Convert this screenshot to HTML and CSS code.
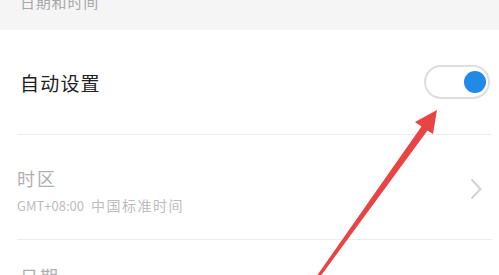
FILE: index.html
```html
<!DOCTYPE html>
<html lang="zh">
<head>
<meta charset="utf-8">
<link rel="stylesheet" href="styles.css">
</head>
<body>
<div class="page">
  <div class="section-header"><span class="header-title">日期和时间</span></div>
  <div class="row row-auto">
    <span class="row-title">自动设置</span>
    <div class="toggle"><div class="knob"></div></div>
  </div>
  <div class="row row-zone">
    <div class="zone-text">
      <div class="zone-title">时区</div>
      <div class="zone-sub">GMT+08:00 <span class="zone-name">中国标准时间</span></div>
    </div>
    <svg class="chevron" width="12" height="22" viewBox="0 0 12 22"><path d="M1.5 1.5 L10.5 11 L1.5 20.5" fill="none" stroke="#d2d2d2" stroke-width="2"/></svg>
  </div>
  <div class="row row-date">
    <span class="date-title">日期</span>
  </div>
  <svg class="arrow" width="499" height="275" viewBox="0 0 499 275">
    <polygon points="437,110 415,122 421.5,126.5 316,277 320,277 427.5,130.5 433,134" fill="#e84444"/>
  </svg>
</div>
</body>
</html>
```
FILE: styles.css
```css
html, body {
  margin: 0;
  padding: 0;
  background: #ffffff;
}
body {
  font-family: "Noto Sans CJK SC", "Noto Sans", sans-serif;
  width: 499px;
  height: 275px;
  overflow: hidden;
}
.page {
  position: relative;
  width: 499px;
  height: 275px;
  overflow: hidden;
}
.section-header {
  height: 30px;
  background: #f5f5f5;
  padding-left: 20px;
  box-sizing: border-box;
  overflow: hidden;
}
.header-title {
  display: block;
  margin-top: -8px;
  line-height: 20px;
  font-size: 15px;
  letter-spacing: 0.8px;
  color: #a8a8a8;
}
.row {
  display: flex;
  align-items: center;
  box-sizing: border-box;
  margin-left: 17px;
  margin-right: 7px;
}
.row-auto {
  height: 105px;
  border-bottom: 1px solid #ececec;
  padding-left: 3px;
  padding-right: 2px;
  justify-content: space-between;
}
.row-title {
  font-size: 19px;
  letter-spacing: 1.2px;
  color: #222222;
}
.toggle {
  width: 66px;
  height: 34px;
  box-sizing: border-box;
  border: 2px solid #dedede;
  border-radius: 17px;
  background: #ffffff;
  display: flex;
  align-items: center;
  justify-content: flex-end;
  padding-right: 2px;
}
.knob {
  width: 22px;
  height: 22px;
  border-radius: 50%;
  background: #2189e6;
}
.row-zone {
  height: 105px;
  border-bottom: 1px solid #ececec;
  justify-content: space-between;
  padding-right: 10px;
}
.zone-text {
  display: flex;
  flex-direction: column;
  margin-top: 6px;
}
.zone-title {
  font-size: 18px;
  line-height: 24px;
  letter-spacing: 2px;
  color: #b0b0b0;
}
.zone-sub {
  margin-top: 6px;
  font-size: 13px;
  line-height: 18px;
  color: #bdbdbd;
}
.zone-name {
  font-size: 14px;
  letter-spacing: 1.5px;
  margin-left: 4px;
}
.chevron {
  display: block;
  margin-top: 4px;
}
.row-date {
  align-items: flex-start;
  padding-left: 3px;
  padding-top: 24px;
  height: 60px;
}
.date-title {
  font-size: 18px;
  line-height: 24px;
  letter-spacing: 2px;
  color: #b0b0b0;
}
.arrow {
  position: absolute;
  left: 0;
  top: 0;
  pointer-events: none;
}
```
